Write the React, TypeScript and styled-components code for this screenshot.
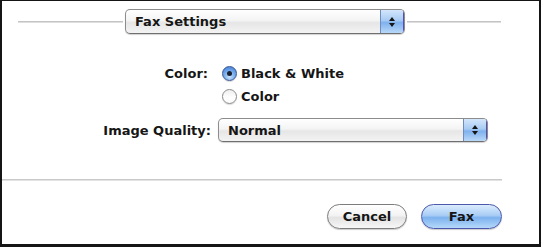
import React from "react";
import styled, { createGlobalStyle } from "styled-components";

const Global = createGlobalStyle`
  html, body { margin: 0; padding: 0; background: #fff; }
  * { box-sizing: border-box; }
`;

const Sheet = styled.div`
  width: 541px;
  height: 247px;
  border-style: solid;
  border-color: #151515;
  border-width: 1px 2px 3px 2px;
  background: #fff;
  display: flex;
  flex-direction: column;
  font-family: "DejaVu Sans", "Liberation Sans", sans-serif;
  font-size: 13px;
  font-weight: bold;
  color: #161616;
`;

const Header = styled.div`
  margin-top: 8px;
  padding-left: 16px;
  display: flex;
  align-items: center;
  gap: 2px;
`;

const Rule = styled.div<{ $w: number }>`
  width: ${(p) => p.$w}px;
  height: 2px;
  background: #c4c4c4;
  border-bottom: 1px solid #dedede;
`;

const Popup = styled.div<{ $w: number; $h?: number }>`
  width: ${(p) => p.$w}px;
  height: ${(p) => p.$h ?? 25}px;
  display: flex;
  align-items: stretch;
  border: 1px solid #8c8c8c;
  border-bottom-color: #6f6f6f;
  border-radius: 5px;
  background: linear-gradient(#ffffff 0%, #f4f4f4 45%, #e6e6e6 55%, #f3f3f3 100%);
  box-shadow: 0 1px 1px rgba(0, 0, 0, 0.18);
  overflow: hidden;
`;

const PopupLabel = styled.span`
  flex: 1;
  display: flex;
  align-items: center;
  padding-left: 9px;
  white-space: nowrap;
`;

const Stepper = styled.span`
  width: 24px;
  display: flex;
  align-items: center;
  justify-content: center;
  background: linear-gradient(#d3e6fb 0%, #a8cbf3 45%, #7fb1ee 55%, #b9d8f8 100%);
  border-left: 1px solid #6f8cc0;
  border-right: 1px solid #5250b0;
`;

const Arrows = () => (
  <svg width="8" height="12" viewBox="0 0 8 12">
    <path d="M4 1 L7 5 L1 5 Z" fill="#151515" />
    <path d="M4 11 L7 7 L1 7 Z" fill="#151515" />
  </svg>
);

const Form = styled.div`
  margin-top: 31px;
  display: grid;
  grid-template-columns: 209px 1fr;
  column-gap: 7px;
  align-items: center;
`;

const Label = styled.div<{ $row: number; $rightPad?: number; $top?: number }>`
  grid-column: 1;
  grid-row: ${(p) => p.$row};
  margin-top: ${(p) => p.$top ?? 0}px;
  text-align: right;
  padding-right: ${(p) => p.$rightPad ?? 0}px;
  white-space: nowrap;
`;

const Control = styled.div<{ $row: number; $top?: number }>`
  grid-column: 2;
  grid-row: ${(p) => p.$row};
  margin-top: ${(p) => p.$top ?? 0}px;
  display: flex;
  align-items: center;
`;

const RadioRow = styled.label`
  display: flex;
  align-items: center;
  gap: 4px;
  height: 16px;
  margin-left: 4px;
`;

const RadioDot = styled.span<{ $on?: boolean }>`
  width: 15px;
  height: 15px;
  border-radius: 50%;
  display: inline-flex;
  align-items: center;
  justify-content: center;
  border: 1px solid ${(p) => (p.$on ? "#3a5690" : "#8a8a8a")};
  background: ${(p) =>
    p.$on
      ? "radial-gradient(circle at 50% 75%, #c8e4fd 0%, #79aeee 45%, #3876d4 100%)"
      : "linear-gradient(#efefef 0%, #ffffff 60%, #fafafa 100%)"};
  box-shadow: 0 1px 1px rgba(0, 0, 0, 0.15);
  &::after {
    content: "";
    display: ${(p) => (p.$on ? "block" : "none")};
    width: 5px;
    height: 5px;
    border-radius: 50%;
    background: #1a2230;
  }
`;

const Separator = styled.div`
  margin-top: 37px;
  width: 500px;
  height: 2px;
  background: #c9c9c9;
  border-bottom: 1px solid #e2e2e2;
`;

const Buttons = styled.div`
  margin-top: 23px;
  padding-right: 37px;
  display: flex;
  justify-content: flex-end;
  gap: 14px;
`;

const Pill = styled.button<{ $primary?: boolean; $w: number }>`
  width: ${(p) => p.$w}px;
  height: 25px;
  border-radius: 13px;
  font: inherit;
  color: #161616;
  padding: 0;
  border: 1px solid ${(p) => (p.$primary ? "#4c58ac" : "#7c7c7c")};
  background: ${(p) =>
    p.$primary
      ? "linear-gradient(#dbecfd 0%, #a9cdf5 45%, #7db2ee 55%, #b6d8fa 100%)"
      : "linear-gradient(#ffffff 0%, #f3f3f3 45%, #e3e3e3 55%, #f7f7f7 100%)"};
  box-shadow: 0 1px 1px rgba(0, 0, 0, 0.2);
`;

export default function App() {
  return (
    <>
      <Global />
      <Sheet>
        <Header>
          <Rule $w={105} />
          <Popup $w={280}>
            <PopupLabel>Fax Settings</PopupLabel>
            <Stepper>
              <Arrows />
            </Stepper>
          </Popup>
          <Rule $w={94} />
        </Header>
        <Form>
          <Label $row={1} $rightPad={3}>Color:</Label>
          <Control $row={1}>
            <RadioRow>
              <RadioDot $on />
              Black &amp; White
            </RadioRow>
          </Control>
          <Control $row={2} $top={7}>
            <RadioRow>
              <RadioDot />
              Color
            </RadioRow>
          </Control>
          <Label $row={3} $top={14}>Image Quality:</Label>
          <Control $row={3} $top={14}>
            <Popup $w={270} $h={24}>
              <PopupLabel>Normal</PopupLabel>
              <Stepper>
                <Arrows />
              </Stepper>
            </Popup>
          </Control>
        </Form>
        <Separator />
        <Buttons>
          <Pill $w={80}>Cancel</Pill>
          <Pill $w={81} $primary>Fax</Pill>
        </Buttons>
      </Sheet>
    </>
  );
}
